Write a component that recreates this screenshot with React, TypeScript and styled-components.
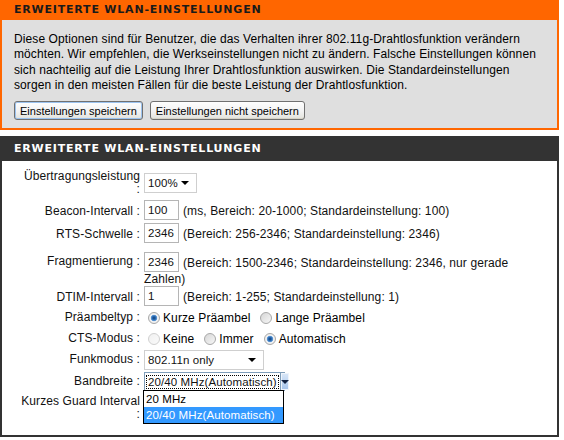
import styled, { createGlobalStyle } from "styled-components";

const GlobalStyle = createGlobalStyle`
  body {
    margin: 0;
    background: #fff;
    font-family: "Liberation Sans", Arial, sans-serif;
    font-size: 12px;
    letter-spacing: 0.1px;
    color: #000;
  }
`;

const Page = styled.div`
  width: 559px;
`;

const IntroBox = styled.section`
  background: #dfdfdf;
  border: 2px solid #ff6600;
  border-top: 0;
  padding-bottom: 8px;
`;

const BoxTitle = styled.h2<{ $tone: "orange" | "dark" }>`
  margin: 0 -2px;
  padding: 0 14px;
  height: ${(p) => (p.$tone === "orange" ? "20px" : "25px")};
  line-height: ${(p) => (p.$tone === "orange" ? "20px" : "25px")};
  background: ${(p) => (p.$tone === "orange" ? "#ff6600" : "#333")};
  color: ${(p) => (p.$tone === "orange" ? "#1a1a1a" : "#fff")};
  font-family: "DejaVu Sans", Verdana, sans-serif;
  font-size: 11px;
  font-weight: bold;
  letter-spacing: 0.8px;
`;

const IntroText = styled.p`
  margin: 0;
  padding: 12px 12px 0;
  line-height: 15.3px;
`;

const ButtonRow = styled.div`
  display: flex;
  gap: 7px;
  padding: 8px 12px 0;
`;

const Button = styled.button<{ $primary?: boolean }>`
  height: 19px;
  padding: 0 5px;
  font-family: "Liberation Sans", Arial, sans-serif;
  font-size: 11px;
  color: #000;
  border: 1px solid #707070;
  border-radius: 3px;
  background: linear-gradient(#fefefe, #f2f2f2 55%, #e2e2dc);
  box-shadow: ${(p) =>
    p.$primary ? "inset 0 0 0 1px #9cc3ef" : "inset 0 -1px 0 #d6d3c7"};
`;

const SettingsBox = styled.section`
  margin-top: 6px;
  border: 2px solid #333;
  border-top: 0;
`;

const Form = styled.div`
  padding: 9px 20px 14px 16px;
`;

const Row = styled.div<{ $h?: number; $mt?: number; $top?: boolean }>`
  display: grid;
  grid-template-columns: 122px 1fr;
  column-gap: 4px;
  align-items: ${(p) => (p.$top ? "start" : "center")};
  min-height: ${(p) => p.$h ?? 21}px;
  margin-top: ${(p) => p.$mt ?? 0}px;
`;

const Label = styled.div`
  text-align: right;
  line-height: 13px;
  white-space: nowrap;
  color: #111;
`;

const Colon = styled.span<{ $own?: boolean }>`
  display: ${(p) => (p.$own ? "block" : "inline")};
`;

const Value = styled.div`
  position: relative;
  line-height: 15px;
  color: #111;
`;

const TextInput = styled.span`
  display: inline-block;
  box-sizing: border-box;
  width: 35px;
  height: 20px;
  margin: -3px 4px 0 0;
  padding: 0 3px;
  border: 1px solid #b5b5b5;
  background: #fff;
  line-height: 18px;
  vertical-align: middle;
  font-size: 11.5px;
`;

const SelectBox = styled.div<{ $width: number; $focus?: boolean }>`
  display: flex;
  align-items: center;
  box-sizing: border-box;
  width: ${(p) => p.$width}px;
  height: ${(p) => (p.$focus ? 19 : 20)}px;
  border: 1px solid ${(p) => (p.$focus ? "#7f9db9" : "#cfcfcf")};
  background: #fff;
  font-size: 11.5px;
`;

const SelectText = styled.span<{ $focus?: boolean }>`
  flex: 1;
  margin: 1px;
  padding: 0 2px;
  line-height: 14px;
  outline: ${(p) => (p.$focus ? "1px dotted #000" : "none")};
  outline-offset: -1px;
  white-space: nowrap;
`;

const Caret = styled.span`
  width: 0;
  height: 0;
  margin-right: 7px;
  border-left: 4px solid transparent;
  border-right: 4px solid transparent;
  border-top: 4px solid #000;
`;

const DropButton = styled.span`
  display: flex;
  align-items: center;
  justify-content: center;
  align-self: stretch;
  width: 17px;
  border-left: 1px solid #7f9db9;
  background: linear-gradient(#dbe8f8, #b9d2f1 60%, #a4c2ea);
  box-shadow: inset 0 0 0 1px #eef4fc;

  &::after {
    content: "";
    border-left: 4px solid transparent;
    border-right: 4px solid transparent;
    border-top: 4px solid #102040;
  }
`;

const OptionList = styled.ul`
  position: absolute;
  left: -1px;
  top: 18px;
  z-index: 2;
  box-sizing: border-box;
  width: 141px;
  margin: 0;
  padding: 0;
  list-style: none;
  border: 1px solid #000;
  background: #fff;
  font-size: 11.5px;
`;

const Option = styled.li<{ $active?: boolean }>`
  height: 16px;
  padding: 0 2px;
  line-height: 16px;
  background: ${(p) => (p.$active ? "#3399ff" : "#fff")};
  color: ${(p) => (p.$active ? "#fff" : "#000")};
`;

const RadioGroup = styled.div`
  display: flex;
  align-items: center;
  gap: 10px;
  padding-left: 4px;
`;

const RadioItem = styled.label`
  display: flex;
  align-items: center;
  gap: 3px;
`;

const RadioDot = styled.span<{ $checked?: boolean; $muted?: boolean }>`
  box-sizing: border-box;
  width: 12px;
  height: 12px;
  border-radius: 50%;
  border: 1px solid ${(p) => (p.$muted ? "#d0d0d0" : "#a8a8a8")};
  background: ${(p) =>
    p.$checked
      ? "radial-gradient(circle, #0d3f7a 0, #2f6fb6 2px, #6aa2dc 3px, #f4f4f4 3.6px, #e2e2e2 100%)"
      : p.$muted
      ? "linear-gradient(135deg, #f0f0f0, #fafafa)"
      : "linear-gradient(135deg, #d6d6d6, #f7f7f7)"};
`;

type Field = { label: string; wrap?: boolean };

function FieldLabel({ label, wrap }: Field) {
  return (
    <Label>
      {label}
      <Colon $own={wrap}>{wrap ? ":" : " :"}</Colon>
    </Label>
  );
}

function Radio({
  text,
  checked,
  muted,
}: {
  text: string;
  checked?: boolean;
  muted?: boolean;
}) {
  return (
    <RadioItem>
      <RadioDot $checked={checked} $muted={muted} />
      {text}
    </RadioItem>
  );
}

export default function App() {
  return (
    <>
      <GlobalStyle />
      <Page>
        <IntroBox>
          <BoxTitle $tone="orange">ERWEITERTE WLAN-EINSTELLUNGEN</BoxTitle>
          <IntroText>
            Diese Optionen sind für Benutzer, die das Verhalten ihrer
            802.11g-Drahtlosfunktion verändern
            <br />
            möchten. Wir empfehlen, die Werkseinstellungen nicht zu ändern.
            Falsche Einstellungen können
            <br />
            sich nachteilig auf die Leistung Ihrer Drahtlosfunktion auswirken.
            Die Standardeinstellungen
            <br />
            sorgen in den meisten Fällen für die beste Leistung der
            Drahtlosfunktion.
          </IntroText>
          <ButtonRow>
            <Button $primary>Einstellungen speichern</Button>
            <Button>Einstellungen nicht speichern</Button>
          </ButtonRow>
        </IntroBox>

        <SettingsBox>
          <BoxTitle $tone="dark">ERWEITERTE WLAN-EINSTELLUNGEN</BoxTitle>
          <Form>
            <Row>
              <FieldLabel label="Übertragungsleistung" wrap />
              <Value>
                <SelectBox $width={53}>
                  <SelectText>100%</SelectText>
                  <Caret />
                </SelectBox>
              </Value>
            </Row>
            <Row $h={23} $mt={4}>
              <FieldLabel label="Beacon-Intervall" />
              <Value>
                <TextInput>100</TextInput>
                (ms, Bereich: 20-1000; Standardeinstellung: 100)
              </Value>
            </Row>
            <Row $h={23}>
              <FieldLabel label="RTS-Schwelle" />
              <Value>
                <TextInput>2346</TextInput>
                (Bereich: 256-2346; Standardeinstellung: 2346)
              </Value>
            </Row>
            <Row $mt={9} $top>
              <FieldLabel label="Fragmentierung" />
              <Value>
                <TextInput>2346</TextInput>
                <span>
                  (Bereich: 1500-2346; Standardeinstellung: 2346, nur gerade
                </span>
                <br />
                <span>Zahlen)</span>
              </Value>
            </Row>
            <Row $h={20}>
              <FieldLabel label="DTIM-Intervall" />
              <Value>
                <TextInput>1</TextInput>
                (Bereich: 1-255; Standardeinstellung: 1)
              </Value>
            </Row>
            <Row>
              <FieldLabel label="Präambeltyp" />
              <RadioGroup>
                <Radio text="Kurze Präambel" checked />
                <Radio text="Lange Präambel" />
              </RadioGroup>
            </Row>
            <Row>
              <FieldLabel label="CTS-Modus" />
              <RadioGroup>
                <Radio text="Keine" muted />
                <Radio text="Immer" />
                <Radio text="Automatisch" checked />
              </RadioGroup>
            </Row>
            <Row>
              <FieldLabel label="Funkmodus" />
              <Value>
                <SelectBox $width={120}>
                  <SelectText>802.11n only</SelectText>
                  <Caret />
                </SelectBox>
              </Value>
            </Row>
            <Row $h={23}>
              <FieldLabel label="Bandbreite" />
              <Value>
                <SelectBox $width={141} $focus>
                  <SelectText $focus>20/40 MHz(Automatisch)</SelectText>
                  <DropButton />
                </SelectBox>
                <OptionList>
                  <Option>20 MHz</Option>
                  <Option $active>20/40 MHz(Automatisch)</Option>
                </OptionList>
              </Value>
            </Row>
            <Row $mt={2}>
              <FieldLabel label="Kurzes Guard Interval" wrap />
              <Value />
            </Row>
          </Form>
        </SettingsBox>
      </Page>
    </>
  );
}
